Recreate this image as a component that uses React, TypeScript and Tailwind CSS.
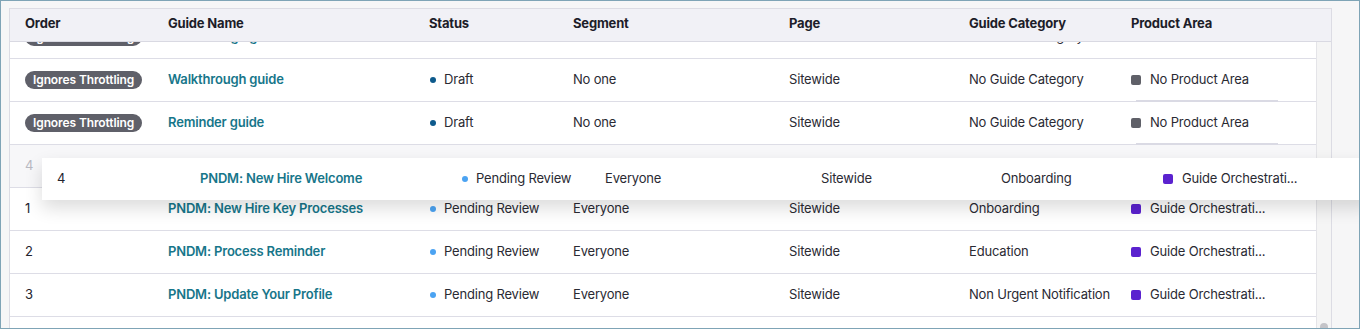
import React from "react";

type Row = {
  order: React.ReactNode;
  name: string;
  status: "Draft" | "Pending Review";
  segment: string;
  page: string;
  category: string;
  area: "none" | "orch";
};

const COLS = "grid grid-cols-[143px_261px_144px_216px_180px_162px_200px]";

const badge = (
  <span className="inline-flex h-[18px] items-center rounded-full bg-[#5f6069] px-[8px] text-[12px] font-semibold leading-none tracking-[-0.1px] text-white">
    Ignores Throttling
  </span>
);

const draftRow = (name: string): Row => ({
  order: badge,
  name,
  status: "Draft",
  segment: "No one",
  page: "Sitewide",
  category: "No Guide Category",
  area: "none",
});

const pndm = (order: string, name: string, category: string): Row => ({
  order,
  name,
  status: "Pending Review",
  segment: "Everyone",
  page: "Sitewide",
  category,
  area: "orch",
});

function Cells({ r, markLine }: { r: Row; markLine?: boolean }) {
  return (
    <>
      <div className="flex items-center pl-[15px] text-[#24242e]">{r.order}</div>
      <div className="flex items-center pl-[15px] font-semibold text-[#17768a]">{r.name}</div>
      <div className="flex items-center pl-[16px]">
        <span
          className={
            r.status === "Draft"
              ? "h-[6px] w-[6px] rounded-full bg-[#0d5a8c]"
              : "h-[6px] w-[6px] rounded-full bg-[#4ba3f2]"
          }
        />
        <span className="ml-[8px]">{r.status}</span>
      </div>
      <div className="flex items-center pl-[15px]">{r.segment}</div>
      <div className="flex items-center pl-[15px]">{r.page}</div>
      <div className="flex items-center pl-[15px]">{r.category}</div>
      <div className="relative flex items-center pl-[15px]">
        <span
          className={
            r.area === "none"
              ? "h-[10px] w-[10px] rounded-[2px] bg-[#5f6068]"
              : "h-[10px] w-[10px] rounded-[2px] bg-[#5b22cf]"
          }
        />
        <span className="ml-[9px]">{r.area === "none" ? "No Product Area" : "Guide Orchestrati..."}</span>
        {markLine && (
          <span className="absolute bottom-[-1px] left-[20px] h-[2px] w-[142px] bg-[#dadae4]" />
        )}
      </div>
    </>
  );
}

function BodyRow({ r, className = "", markLine }: { r: Row; className?: string; markLine?: boolean }) {
  return (
    <div className={`${COLS} h-[43px] border-b border-[#dddde6] bg-white ${className}`}>
      <Cells r={r} markLine={markLine} />
    </div>
  );
}

export default function App() {
  const headers = ["Order", "Guide Name", "Status", "Segment", "Page", "Guide Category", "Product Area"];
  return (
    <div className="relative h-[329px] w-[1360px] overflow-hidden border border-[#7fa4b6] bg-[#f6f6f7] pl-[8px] pt-[7px] font-['Inter','Noto_Sans',sans-serif] text-[13px] tracking-[-0.18px] text-[#2a2a33]">
      <div className="w-[1323px] border border-b-0 border-[#dcdce4]">
        {/* header */}
        <div className={`${COLS} h-[33px] border-b border-[#d9d9e2] bg-[#f1f1f6] pb-[2px] font-bold text-[#1d1d29]`}>
          {headers.map((h) => (
            <div key={h} className="flex items-center pl-[15px]">
              {h}
            </div>
          ))}
        </div>
        {/* body */}
        <div className="flex">
          <div className="w-[1306px] overflow-hidden">
            <div className="mt-[-26px]">
              <BodyRow r={draftRow("Walkthrough guide")} />
            </div>
            <BodyRow r={draftRow("Walkthrough guide")} markLine />
            <BodyRow r={draftRow("Reminder guide")} markLine />
            <div className={`${COLS} h-[43px] border-b border-[#dddde6] bg-[#f7f7f9]`}>
              <div className="flex items-center pl-[15px] text-[#b9b9c2]">4</div>
            </div>
            <BodyRow r={pndm("1", "PNDM: New Hire Key Processes", "Onboarding")} />
            <BodyRow r={pndm("2", "PNDM: Process Reminder", "Education")} />
            <BodyRow r={pndm("3", "PNDM: Update Your Profile", "Non Urgent Notification")} />
            <BodyRow r={pndm("5", "PNDM: Check In", "Onboarding")} />
          </div>
          <div className="flex w-[15px] justify-center border-l border-[#e4e4e8] bg-[#f5f5f5]">
            <div className="mt-[281px] h-[10px] w-[8px] rounded-full bg-[#c4c4c8]" />
          </div>
        </div>
      </div>
      {/* dragged row overlay */}
      <div
        className={`${COLS} absolute left-[41px] top-[157px] h-[42px] w-[1330px] bg-white shadow-[0_8px_18px_rgba(0,0,0,0.14)]`}
      >
        <Cells r={pndm("4", "PNDM: New Hire Welcome", "Onboarding")} />
      </div>
    </div>
  );
}
